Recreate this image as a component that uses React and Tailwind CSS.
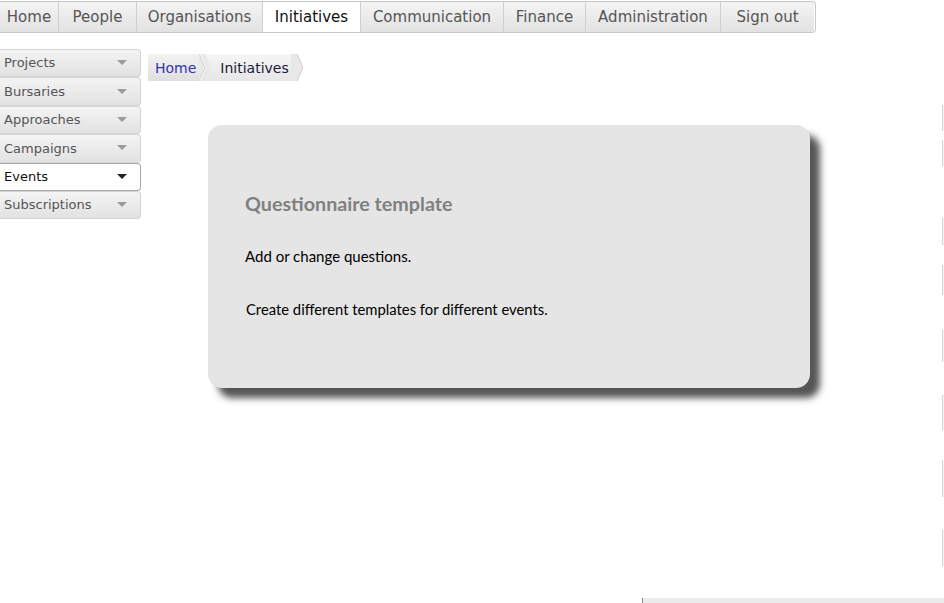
const navItems = ['Home', 'People', 'Organisations', 'Initiatives', 'Communication', 'Finance', 'Administration', 'Sign out'];
const navWidths = ['w-[59px]', 'w-[78px]', 'w-[126px]', 'w-[99px]', 'w-[143px]', 'w-[82px]', 'w-[135px]', 'w-[93px]'];
const sideItems = ['Projects', 'Bursaries', 'Approaches', 'Campaigns', 'Events', 'Subscriptions'];

function Caret({ dark }) {
  return (
    <svg width="10" height="6" viewBox="0 0 10 6" className="shrink-0">
      <path d="M0 0 L10 0 L5 5 Z" fill={dark ? '#222' : '#9a9a9a'} />
    </svg>
  );
}

export default function App() {
  return (
    <div className="relative w-[944px] h-[603px] overflow-hidden bg-white font-['DejaVu_Sans',sans-serif]">

      {/* ── Top nav ── */}
      <div className="flex mt-px h-[32px] w-[816px] border border-l-0 border-[#c8c8c8] rounded-r-[4px] overflow-hidden">
        {navItems.map((n, i) => {
          const active = n === 'Initiatives';
          return (
            <div key={n}
              className={`${navWidths[i]} flex items-center justify-center pt-px text-[15px] ${i < navItems.length - 1 ? 'border-r border-[#d0d0d0]' : ''} ${active ? 'bg-white text-[#111] border-l border-[#b8b8b8] -ml-px' : 'bg-gradient-to-b from-[#f4f4f4] to-[#e2e2e2] text-[#555]'}`}>
              {n}
            </div>
          );
        })}
      </div>

      <div className="flex mt-[15px]">
        {/* ── Left menu ── */}
        <div className="w-[141px] shrink-0 flex flex-col pt-px">
          {sideItems.map(s => {
            const active = s === 'Events';
            return (
              <div key={s}
                className={`h-[28.4px] flex items-center justify-between pl-1 pr-[13px] text-[13px] border border-l-0 rounded-r-[4px] ${active ? 'bg-white border-[#a8a8a8] text-[#111]' : 'bg-gradient-to-b from-[#f4f4f4] to-[#e2e2e2] border-[#d4d4d4] text-[#555]'}`}>
                <span>{s}</span>
                <Caret dark={active} />
              </div>
            );
          })}
        </div>

        {/* ── Main ── */}
        <div className="flex-1 pl-[7px]">
          {/* Breadcrumb */}
          <div className="flex items-center mt-[6px] h-[27px] text-[14px]">
            <div className="relative h-full flex items-center pl-[7px] pr-[9px] pt-px bg-gradient-to-b from-[#f2f2f2] to-[#e0e0e0] text-[#3434a8]">
              Home
              <svg width="12" height="27" viewBox="0 0 12 27" className="absolute right-[-6px] top-0 z-10">
                <path d="M0 0 L6 0 L12 13.5 L6 27 L0 27 Z" fill="#e8e8e8" />
                <path d="M0.5 0 L6.5 13.5 L0.5 27" fill="none" stroke="#fff" strokeWidth="1.5" />
                <path d="M0 0 L6 13.5 L0 27" fill="none" stroke="#cfcfcf" strokeWidth="1" />
              </svg>
            </div>
            <div className="relative h-full flex items-center pl-[15px] pr-[2px] pt-px bg-gradient-to-b from-[#f6f6f6] to-[#e6e6e6] text-[#1a1a3a]">
              Initiatives
              <svg width="12" height="27" viewBox="0 0 12 27" className="absolute right-[-12px] top-0">
                <path d="M0 0 L0 27 L6 27 L12 13.5 L6 0 Z" fill="#e8e8e8" />
                <path d="M6 0 L12 13.5 L6 27" fill="none" stroke="#cfcfcf" strokeWidth="1" />
              </svg>
            </div>
          </div>

          {/* Card */}
          <div className="mt-[44px] ml-[60px] w-[602px] h-[263px] rounded-[14px] bg-[#e5e5e5] shadow-[10px_10px_7px_#555] pl-[37px] pt-[66px] font-['Lato',sans-serif]">
            <h2 className="text-[19.7px] font-bold text-[#808080] leading-[26px]">Questionnaire template</h2>
            <p className="mt-[29px] text-[15px] text-black leading-[20px]">Add or change questions.</p>
            <p className="mt-[33px] ml-px text-[14.8px] text-black leading-[20px]">Create different templates for different events.</p>
          </div>
        </div>
      </div>

      {/* right edge slivers */}
      {[[105, 26], [140, 26], [218, 27], [265, 30], [330, 32], [395, 35], [460, 37], [530, 36]].map(([t, h], i) => (
        <div key={i} className="absolute right-0 w-[2px] border-l border-[#d6d6d6] bg-[#f6f6f6]" style={{ top: t, height: h }} />
      ))}

      {/* bottom bar */}
      <div className="absolute left-[642px] right-0 top-[598px] h-[5px] bg-[#ececec] border-l border-[#888]" />
    </div>
  );
}
